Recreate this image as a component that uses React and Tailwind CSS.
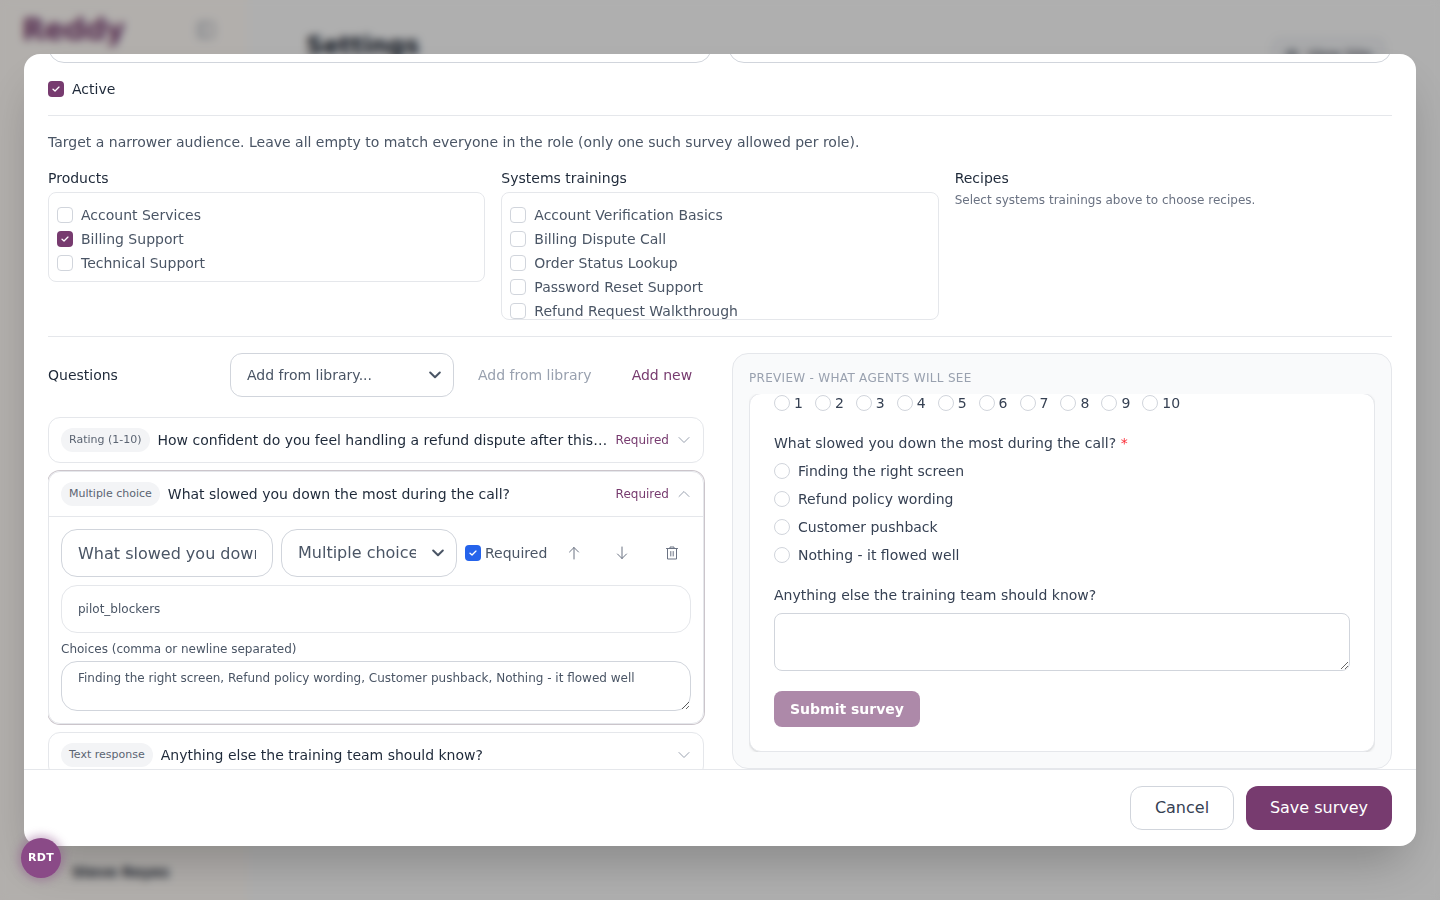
import React from "react";
import { PanelLeft, Eye } from "lucide-react";

const F = { fontFamily: '"DejaVu Sans", sans-serif' };

function Box({ checked, color = "bg-[#773b6f]" }) {
  return (
    <span className={`flex h-4 w-4 shrink-0 items-center justify-center rounded border ${checked ? `${color} border-transparent` : "border-gray-300 bg-white"}`}>
      {checked && (
        <svg viewBox="0 0 16 16" className="h-4 w-4" fill="none" stroke="white" strokeWidth="1.5" strokeLinecap="round" strokeLinejoin="round">
          <path d="M4.6 8.2 6.9 10.3 11.4 5.8" />
        </svg>
      )}
    </span>
  );
}

function Check({ label, checked }) {
  return (
    <div className="flex h-6 items-center gap-2 text-sm text-gray-600">
      <Box checked={checked} />
      <span>{label}</span>
    </div>
  );
}

function Radio() {
  return <span className="h-4 w-4 shrink-0 rounded-full border border-gray-300 bg-white" />;
}

function Tag({ children }) {
  return <span className="shrink-0 rounded-full bg-gray-100 px-2 py-1 text-[11px] leading-4 text-[#5b6472]">{children}</span>;
}

function Chev({ up }) {
  return (
    <svg viewBox="0 0 16 16" className="h-4 w-4 shrink-0 text-gray-400" fill="none" stroke="currentColor" strokeWidth="1" strokeLinecap="round" strokeLinejoin="round">
      <path d={up ? "M3 10.5 8 5.5 13 10.5" : "M3 5.5 8 10.5 13 5.5"} />
    </svg>
  );
}

function Select({ label, className, box }) {
  return (
    <div className={`relative shrink-0 ${box}`}>
      <select className={`h-full w-full appearance-none bg-white pl-4 pr-10 text-gray-600 ${className}`} defaultValue="a">
        <option value="a">{label}</option>
      </select>
      <svg viewBox="0 0 12 8" className="pointer-events-none absolute right-[13px] top-1/2 h-2 w-3 -translate-y-1/2 text-gray-600" fill="none" stroke="currentColor" strokeWidth="2" strokeLinecap="round" strokeLinejoin="round">
        <path d="M1.2 1.5 6 6.2 10.8 1.5" />
      </svg>
    </div>
  );
}

export default function App() {
  return (
    <div style={F} className="relative h-[900px] w-[1440px] overflow-hidden bg-[#fbfbfb]">
      <div className="flex h-full">
        <aside className="flex w-[248px] shrink-0 flex-col justify-between bg-[#fffbf7] pb-[18px] pl-[22px] pr-8 pt-3">
          <div className="flex items-center justify-between">
            <span className="text-3xl font-bold tracking-tight text-[#773b6f]">Reddy</span>
            <PanelLeft size={20} className="text-gray-400" />
          </div>
          <span className="pl-[50px] text-sm font-semibold text-gray-800">Steve Reyes</span>
        </aside>
        <main className="flex flex-1 items-start justify-between pl-[58px] pr-[55px] pt-[30px]">
          <h1 className="text-2xl font-bold text-gray-900">Settings</h1>
          <span className="mt-[8px] flex items-center gap-2 rounded-lg border border-gray-300 bg-gray-100 px-3 py-1.5 text-sm font-medium text-gray-800">
            <Eye size={14} />
            View Site
          </span>
        </main>
      </div>

      <div className="absolute inset-0 flex items-center justify-center bg-black/30 p-6 backdrop-blur-[4px]">
        <div className="flex h-[792px] w-[1392px] flex-col overflow-hidden rounded-2xl bg-white shadow-2xl">
          <div className="h-[715px] shrink-0 overflow-hidden px-6">
            <div className="-mt-[40px] grid grid-cols-2 gap-4">
              <div className="h-[49px] rounded-2xl border border-gray-300 bg-white" />
              <div className="h-[49px] rounded-2xl border border-gray-300 bg-white" />
            </div>
            <div className="mt-[18px] flex h-4 items-center gap-2 text-sm text-gray-800">
              <Box checked />
              <span>Active</span>
            </div>
            <div className="mt-[18px] border-t border-gray-200" />
            <p className="mt-4 text-sm leading-5 text-gray-600">
              Target a narrower audience. Leave all empty to match everyone in the role (only one such survey allowed per role).
            </p>
            <div className="mt-4 grid grid-cols-3 items-start gap-4">
              <div>
                <div className="mb-1 text-sm leading-5 text-gray-800">Products</div>
                <div className="rounded-lg border border-gray-200 px-2 pb-1.5 pt-2.5">
                  <Check label="Account Services" />
                  <Check label="Billing Support" checked />
                  <Check label="Technical Support" />
                </div>
              </div>
              <div>
                <div className="mb-1 text-sm leading-5 text-gray-800">Systems trainings</div>
                <div className="h-[128px] overflow-hidden rounded-lg border border-gray-200 px-2 py-2.5">
                  <Check label="Account Verification Basics" />
                  <Check label="Billing Dispute Call" />
                  <Check label="Order Status Lookup" />
                  <Check label="Password Reset Support" />
                  <Check label="Refund Request Walkthrough" />
                </div>
              </div>
              <div>
                <div className="mb-1 text-sm leading-5 text-gray-800">Recipes</div>
                <p className="text-xs leading-4 text-gray-500">Select systems trainings above to choose recipes.</p>
              </div>
            </div>
            <div className="mt-4 border-t border-gray-200" />

            <div className="mt-4 grid grid-cols-2 gap-6">
              <div className="h-[416px] overflow-hidden pr-1">
                <div className="flex h-11 items-center">
                  <span className="w-[182px] shrink-0 text-sm text-gray-800">Questions</span>
                  <Select label="Add from library..." box="h-11 w-[224px]" className="rounded-xl border border-gray-300 text-sm" />
                  <span className="ml-6 text-sm text-gray-400">Add from library</span>
                  <span className="ml-10 text-sm text-[#773b6f]">Add new</span>
                </div>

                <div className="mt-5 flex h-[46px] items-center gap-2 rounded-xl border border-gray-200 pl-3 pr-[11px]">
                  <Tag>Rating (1-10)</Tag>
                  <span className="min-w-0 flex-1 truncate text-sm text-gray-800">How confident do you feel handling a refund dispute after this training session today?</span>
                  <span className="-mr-px text-xs text-[#773b6f]">Required</span>
                  <Chev />
                </div>

                <div className="mt-2 h-[253px] rounded-xl border border-gray-200 ring-1 ring-[#6b5a6b]/35">
                  <div className="flex h-[45px] items-center gap-2 border-b border-gray-200 pl-3 pr-[11px]">
                    <Tag>Multiple choice</Tag>
                    <span className="min-w-0 flex-1 truncate text-sm text-gray-800">What slowed you down the most during the call?</span>
                    <span className="-mr-px text-xs text-[#773b6f]">Required</span>
                    <Chev up />
                  </div>
                  <div className="px-3 pt-3">
                    <div className="flex h-12 items-center gap-2">
                      <input readOnly value="What slowed you down the most during the call?" className="h-12 w-[212px] shrink-0 rounded-2xl border border-gray-300 bg-white px-4 text-base text-gray-600" />
                      <Select label="Multiple choice" box="h-12 w-[176px]" className="rounded-2xl border border-gray-300 text-base" />
                      <span className="flex items-center gap-1 text-sm text-gray-600">
                        <Box checked color="bg-[#2563eb]" />
                        Required
                      </span>
                      <span className="ml-[11px] flex items-center gap-8 text-gray-500">
                        <svg viewBox="0 0 16 16" className="h-4 w-4" fill="none" stroke="currentColor" strokeWidth="1" strokeLinecap="round" strokeLinejoin="round"><path d="M8 14V2.5M3.5 7 8 2.5 12.5 7" /></svg>
                        <svg viewBox="0 0 16 16" className="h-4 w-4" fill="none" stroke="currentColor" strokeWidth="1" strokeLinecap="round" strokeLinejoin="round"><path d="M8 2v11.5M3.5 9 8 13.5 12.5 9" /></svg>
                        <svg viewBox="0 0 16 16" className="ml-[2px] h-4 w-4" fill="none" stroke="currentColor" strokeWidth="1" strokeLinecap="round" strokeLinejoin="round"><path d="M2.5 3.5h11M6 3.5V2h4v1.5M3.5 3.5V14h9V3.5M6.8 6.5V11M9.2 6.5V11" /></svg>
                      </span>
                    </div>
                    <input readOnly value="pilot_blockers" className="mt-2 h-12 w-full rounded-2xl border border-gray-200 bg-white px-4 text-xs text-gray-600" />
                    <div className="mt-2 text-xs leading-4 text-gray-600">Choices (comma or newline separated)</div>
                    <textarea readOnly value="Finding the right screen, Refund policy wording, Customer pushback, Nothing - it flowed well" className="mt-1 block h-[50px] w-full rounded-2xl border border-gray-300 bg-white px-4 py-2 text-xs leading-4 text-gray-600" />
                  </div>
                </div>

                <div className="mt-2 flex h-[46px] items-center gap-2 rounded-xl border border-gray-200 pl-3 pr-[11px]">
                  <Tag>Text response</Tag>
                  <span className="min-w-0 flex-1 truncate text-sm text-gray-800">Anything else the training team should know?</span>
                  <Chev />
                </div>
              </div>

              <div className="flex h-[416px] flex-col overflow-hidden rounded-2xl border border-gray-200 bg-gray-50 px-4 pt-4">
                <div className="mb-2 text-xs uppercase leading-4 tracking-wide text-gray-400">Preview - what agents will see</div>
                <div className="h-[358px] shrink-0 overflow-hidden">
                  <div className="-mt-[1px] flex h-[359px] flex-col rounded-xl border border-gray-200 bg-white px-6 pt-0 shadow-sm">
                    <div className="mt-[1px] flex h-4 items-center gap-3 text-sm text-gray-700">
                      {[1, 2, 3, 4, 5, 6, 7, 8, 9, 10].map((n) => (
                        <span key={n} className="flex items-center gap-1"><Radio />{n}</span>
                      ))}
                    </div>
                    <div className="mt-[22px] text-sm leading-5 text-gray-700">
                      What slowed you down the most during the call? <span className="text-red-500">*</span>
                    </div>
                    <div className="mt-2 flex flex-col gap-2">
                      {["Finding the right screen", "Refund policy wording", "Customer pushback", "Nothing - it flowed well"].map((t) => (
                        <div key={t} className="flex h-5 items-center gap-2 text-sm text-gray-700"><Radio />{t}</div>
                      ))}
                    </div>
                    <div className="mt-5 text-sm leading-5 text-gray-700">Anything else the training team should know?</div>
                    <textarea readOnly className="mt-2 block h-[58px] w-full shrink-0 rounded-lg border border-gray-300 bg-white" />
                    <button className="mt-5 h-9 w-[146px] rounded-lg bg-[#773b6f]/60 text-sm font-bold text-white">Submit survey</button>
                  </div>
                </div>
              </div>
            </div>
          </div>

          <div className="flex flex-1 items-start justify-end gap-3 border-t border-gray-200 px-6 pt-4">
            <button className="h-11 w-[104px] rounded-xl border border-gray-300 bg-white text-base text-gray-700">Cancel</button>
            <button className="h-11 w-[146px] rounded-xl bg-[#773b6f] text-base text-white">Save survey</button>
          </div>
        </div>
      </div>

      <div className="absolute bottom-[22px] left-[21px] flex h-10 w-10 items-center justify-center rounded-full bg-[#8a4a87] text-[11px] font-bold tracking-wide text-white shadow-[0_0_8px_3px_rgba(138,74,135,0.4)]">RDT</div>
    </div>
  );
}
